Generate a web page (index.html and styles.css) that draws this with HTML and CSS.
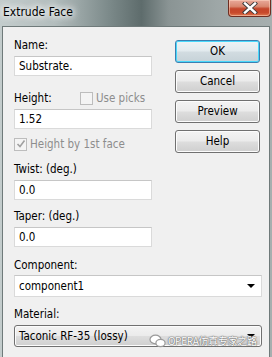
FILE: index.html
```html
<!DOCTYPE html>
<html>
<head>
<meta charset="utf-8">
<link rel="stylesheet" href="styles.css">
</head>
<body>
<div class="window">
  <div class="titlebar">
    <span class="title">Extrude Face</span>
    <div class="close"><svg width="16" height="12" viewBox="0 0 16 12"><path d="M3 1.5 L13 10.5 M13 1.5 L3 10.5" stroke="#3a3a3a" stroke-width="4.2" stroke-linecap="square"/><path d="M3 1.5 L13 10.5 M13 1.5 L3 10.5" stroke="#fff" stroke-width="2.4" stroke-linecap="square"/></svg></div>
  </div>
  <div class="client">
    <div class="top">
      <div class="fields">
        <div class="label">Name:</div>
        <div class="input">Substrate.</div>
        <div class="row r-height">
          <span class="label-inline">Height:</span>
          <span class="check disabled"></span><span class="dim">Use picks</span>
        </div>
        <div class="input">1.52</div>
        <div class="row r-face">
          <span class="check disabled checked"><svg width="10" height="10" viewBox="0 0 10 10"><path d="M1.5 5 L4 7.5 L8.5 1.5" fill="none" stroke="#a0a0a0" stroke-width="1.6"/></svg></span><span class="dim">Height by 1st face</span>
        </div>
        <div class="label l-twist">Twist: (deg.)</div>
        <div class="input">0.0</div>
        <div class="label l-taper">Taper: (deg.)</div>
        <div class="input">0.0</div>
      </div>
      <div class="buttons">
        <div class="btn default">OK</div>
        <div class="btn">Cancel</div>
        <div class="btn">Preview</div>
        <div class="btn">Help</div>
      </div>
    </div>
    <div class="label l-comp">Component:</div>
    <div class="combo edit">component1<span class="arrow"></span></div>
    <div class="label l-mat">Material:</div>
    <div class="combo list">Taconic RF-35 (lossy)<span class="arrow"></span></div>
    <div class="watermark"><svg class="wx" width="17" height="14" viewBox="0 0 17 14"><ellipse cx="6.5" cy="5.5" rx="5.5" ry="4.3" fill="#fff" stroke="#9a9a9a" stroke-width="1.2"/><ellipse cx="11.5" cy="9" rx="4.6" ry="3.6" fill="#fff" stroke="#9a9a9a" stroke-width="1.2"/></svg><span class="wtext">OPERA仿真专家之路</span></div>
  </div>
</div>
</body>
</html>
```
FILE: styles.css
```css
html, body {
  margin: 0;
  padding: 0;
}
body {
  width: 272px;
  height: 357px;
  overflow: hidden;
  font-family: "DejaVu Sans Condensed", "DejaVu Sans", sans-serif;
  font-size: 11.5px;
  color: #000;
}
.window {
  width: 272px;
  height: 357px;
  background: linear-gradient(90deg, #c3cccc 0%, #b3bdbd 20%, #7c8a8a 40%, #5e6c6c 52%, #8a9494 62%, #9ea7a7 80%, #a7afaf 100%);
  display: flex;
  flex-direction: column;
}
.titlebar {
  height: 26px;
  flex: none;
  display: flex;
  align-items: flex-start;
  justify-content: space-between;
}
.title {
  font-family: "DejaVu Sans Condensed", "DejaVu Sans", sans-serif;
  font-size: 12px;
  padding: 5px 0 0 3px;
  line-height: 15px;
  text-shadow: 0 0 6px #fff, 0 0 8px #fff, 0 0 10px #fff;
}
.close {
  width: 43px;
  height: 17px;
  margin-right: 1px;
  box-sizing: border-box;
  border: 1px solid #6e2e22;
  border-top: none;
  border-radius: 0 0 4px 4px;
  background: linear-gradient(180deg, #e9a99a 0%, #d98870 40%, #c4452a 55%, #c84a2c 80%, #e07a50 100%);
  display: flex;
  align-items: center;
  justify-content: center;
  box-shadow: inset 0 0 0 1px rgba(255,220,200,0.5);
}
.client {
  flex: 1;
  margin: 0 2px 0 2px;
  background: #f0f0f0;
  border: 1px solid #6f7a7a;
  border-bottom: none;
  padding: 10px 7px 0 11px;
  position: relative;
}
.top {
  display: flex;
  gap: 23px;
}
.fields {
  width: 138px;
  display: flex;
  flex-direction: column;
}
.label {
  height: 16px;
  line-height: 16px;
}
.input {
  height: 20px;
  box-sizing: border-box;
  background: #fff;
  border: 1px solid #dadada;
  border-top-color: #c6c6c6;
  padding-left: 4px;
  line-height: 18px;
  margin-top: 3px;
}
.row {
  height: 16px;
  line-height: 16px;
  display: flex;
  align-items: center;
}
.r-height {
  margin-top: 14px;
}
.label-inline {
  width: 66px;
}
.r-face {
  margin-top: 7px;
}
.check {
  width: 13px;
  height: 13px;
  box-sizing: border-box;
  border: 1px solid #bdbdbd;
  background: #f4f4f4;
  margin-right: 3px;
  display: flex;
  align-items: center;
  justify-content: center;
}
.dim {
  color: #8d8d8d;
}
.l-twist { margin-top: 9px; }
.l-taper { margin-top: 8px; }
.buttons {
  width: 85px;
  padding-top: 3px;
  display: flex;
  flex-direction: column;
  gap: 7px;
}
.btn {
  height: 23px;
  box-sizing: border-box;
  border: 1px solid #707070;
  border-radius: 3px;
  background: linear-gradient(180deg, #f3f3f3 0%, #ebebeb 48%, #dddddd 52%, #cfcfcf 100%);
  box-shadow: inset 0 0 0 1px #fcfcfc;
  text-align: center;
  line-height: 21px;
}
.btn.default {
  border-color: #3c7fb1;
  box-shadow: inset 0 0 0 1px #48d8fb;
  background: linear-gradient(180deg, #eef3f5 0%, #e2eaee 48%, #d2dce1 52%, #c6d2d8 100%);
}
.l-comp { margin-top: 10px; }
.l-mat { margin-top: 9px; }
.combo {
  width: 248px;
  height: 22px;
  box-sizing: border-box;
  margin-top: 2px;
  padding-left: 4px;
  line-height: 20px;
  position: relative;
}
.combo.edit {
  background: #fff;
  border: 1px solid #dadada;
  border-top-color: #c6c6c6;
}
.combo.list {
  margin-top: 3px;
  border: 1px solid #707070;
  border-radius: 3px;
  background: linear-gradient(180deg, #f3f3f3 0%, #ebebeb 48%, #dddddd 52%, #cfcfcf 100%);
  box-shadow: inset 0 0 0 1px #fcfcfc;
}
.arrow {
  position: absolute;
  right: 6px;
  top: 8px;
  width: 0;
  height: 0;
  border-left: 4px solid transparent;
  border-right: 4px solid transparent;
  border-top: 4px solid #000;
}
.watermark {
  position: absolute;
  left: 146px;
  top: 307px;
  display: flex;
  align-items: center;
  gap: 2px;
  white-space: nowrap;
  font-family: "Noto Sans CJK SC", "DejaVu Sans", sans-serif;
  font-size: 10px;
  line-height: 14px;
  color: #fff;
  text-shadow: 0 0 1px #666, 0 0 1px #666, 0 0 2px #888;
}
.wtext {
  letter-spacing: -0.3px;
}
```
